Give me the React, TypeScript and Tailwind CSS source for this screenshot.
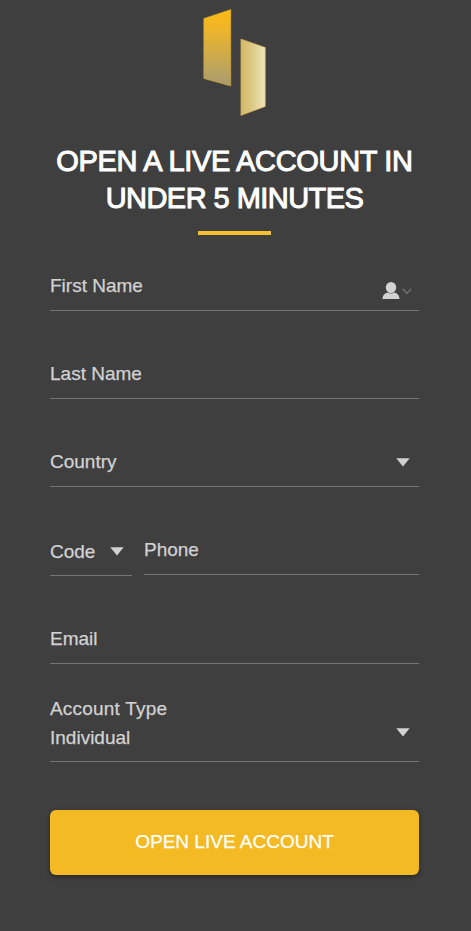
import type { ReactNode } from 'react';

interface FieldProps {
  label: string;
  className?: string;
  children?: ReactNode;
}

function Caret({ className = '' }: { className?: string }) {
  return (
    <svg className={`h-[9px] w-[14px] shrink-0 ${className}`} viewBox="0 0 14 9" fill="#d2d2d2">
      <path d="M0.300 0.300h13.400L7 8.600z" />
    </svg>
  );
}

function Field({ label, className = 'h-[37px] w-full', children }: FieldProps) {
  return (
    <div className={`flex items-start justify-between border-b border-[#757575] ${className}`}>
      <span>{label}</span>
      {children}
    </div>
  );
}

function Logo() {
  return (
    <svg className="h-[108px] w-[64px]" viewBox="0 0 64 108">
      <defs>
        <linearGradient id="logo-left" x1="0" y1="0" x2="0" y2="1">
          <stop offset="0" stopColor="#fbbb12" />
          <stop offset="0.25" stopColor="#eeb52a" />
          <stop offset="0.65" stopColor="#c9a950" />
          <stop offset="1" stopColor="#a99b70" />
        </linearGradient>
        <linearGradient id="logo-right" x1="0" y1="0" x2="1" y2="0">
          <stop offset="0" stopColor="#d2b864" />
          <stop offset="0.5" stopColor="#decb8b" />
          <stop offset="1" stopColor="#f1e4bb" />
        </linearGradient>
      </defs>
      <path d="M0.800 9.500L27.800 0.500V77L0.800 69.500z" fill="url(#logo-left)" stroke="#d4a62c" strokeWidth="0.6" />
      <path d="M37.900 30L62.300 38.500V97.500L37.900 106.500z" fill="url(#logo-right)" stroke="#d0aa4a" strokeWidth="0.6" />
    </svg>
  );
}

export default function App() {
  return (
    <div className="flex h-[931px] w-[471px] flex-col bg-[#3f3f3f] pr-[52px] pl-[50px] font-['Liberation_Sans',Arial,sans-serif] text-[19px] leading-6 text-[#d2d2d2] [-webkit-text-stroke:0.25px_currentColor]">
      {/* Header */}
      <header className="flex flex-col items-center">
        <div className="mt-[9px]">
          <Logo />
        </div>
        <h1 className="mt-[26px] text-center text-[29px] leading-[37px] whitespace-nowrap text-white [-webkit-text-stroke:1px_white]">
          <span className="block tracking-[-0.33px]">OPEN A LIVE ACCOUNT IN</span>
          <span className="block tracking-[-0.55px]">UNDER 5 MINUTES</span>
        </h1>
        <div className="mt-[14px] h-1 w-[73px] bg-[#f4c02f]" />
      </header>

      {/* Form */}
      <form className="mt-[39px] flex flex-col">
        <div className="flex flex-col gap-[51px]">
          <Field label="First Name">
            <div className="mt-2 mr-[7px] flex items-start gap-0.5">
              <svg className="h-[18px] w-[18px]" viewBox="0 0 18 18" fill="#d2d2d2">
                <path d="M9 0a5.2 5.2 0 0 1 5.2 5.2c0 2.3-1.2 4.3-2.8 5.2-1.5.8-3.3.8-4.8 0C5 9.500 3.800 7.500 3.800 5.200A5.200 5.200 0 0 1 9 0z" />
                <path d="M0.500 17c0-3.400 1.500-5.500 4.900-6.600 2.200 1.500 5 1.500 7.200 0 3.400 1.100 4.900 3.200 4.900 6.600z" />
              </svg>
              <svg className="mt-1.5 h-[7px] w-[10px]" viewBox="0 0 10 7" fill="none" stroke="#6c6c6c" strokeWidth="1.6">
                <path d="M0.800 0.800L5 5.400L9.200 0.800" />
              </svg>
            </div>
          </Field>
          <Field label="Last Name" />
          <Field label="Country">
            <Caret className="mt-2 mr-[9px]" />
          </Field>
          <div className="flex items-start gap-3">
            <Field label="Code" className="mt-0.5 h-9 w-[82px]">
              <Caret className="mt-[7px] mr-2" />
            </Field>
            <Field label="Phone" className="h-[37px] flex-1" />
          </div>
        </div>
        <div className="mt-[51px]">
          <Field label="Email" />
        </div>

        <div className="mt-[33px] flex h-[65px] justify-between border-b border-[#757575]">
          <div className="flex flex-col gap-[5px]">
            <span className="tracking-[0.2px]">Account Type</span>
            <span>Individual</span>
          </div>
          <Caret className="mt-[31px] mr-[9px]" />
        </div>

        <button
          type="button"
          className="mt-12 h-[65px] w-full rounded-md bg-[#f4ba23] pb-0.5 text-white shadow-[0_2px_5px_rgba(0,0,0,0.4)]"
        >
          OPEN LIVE ACCOUNT
        </button>
      </form>
    </div>
  );
}
